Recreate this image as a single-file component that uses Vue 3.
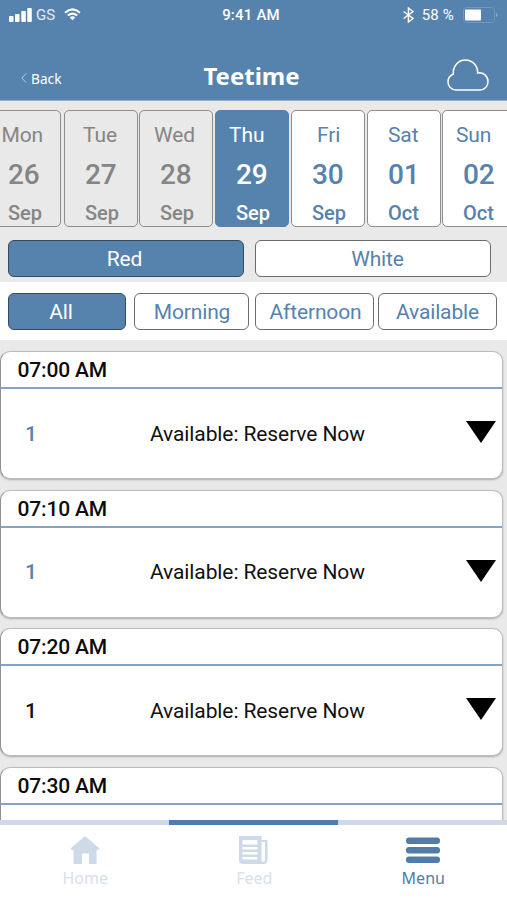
<script setup>
const days = [
  { name: 'Mon', num: '26', month: 'Sep', state: 'past', left: -13, width: 74, inset: 13.5 },
  { name: 'Tue', num: '27', month: 'Sep', state: 'past', left: 64, width: 74, inset: 18 },
  { name: 'Wed', num: '28', month: 'Sep', state: 'past', left: 139, width: 74, inset: 14 },
  { name: 'Thu', num: '29', month: 'Sep', state: 'selected', left: 215, width: 74, inset: 13 },
  { name: 'Fri', num: '30', month: 'Sep', state: 'open', left: 291, width: 74, inset: 25 },
  { name: 'Sat', num: '01', month: 'Oct', state: 'open', left: 367, width: 74, inset: 20 },
  { name: 'Sun', num: '02', month: 'Oct', state: 'open', left: 442, width: 75, inset: 13 }
].map((d, i, all) => ({
  ...d,
  gap: i === 0 ? d.left : d.left - all[i - 1].left - all[i - 1].width
}))

const slots = [
  { time: '07:00 AM', count: '1', accent: true },
  { time: '07:10 AM', count: '1', accent: true },
  { time: '07:20 AM', count: '1', accent: false },
  { time: '07:30 AM' }
]
</script>

<template>
  <div class="screen">
    <header class="top">
      <div class="status">
        <div class="carrier">
          <svg class="signal" width="23" height="14" viewBox="0 0 23 14" fill="#fff">
            <rect x="0" y="8" width="4.5" height="6" rx=".8" />
            <rect x="6" y="6" width="4.5" height="8" rx=".8" />
            <rect x="12.300" y="3" width="4.500" height="11" rx=".8" />
            <rect x="18.300" y="0" width="4.500" height="14" rx=".8" />
          </svg>
          <span class="gs">GS</span>
          <svg class="wifi" width="17" height="13" viewBox="0 0 17 13" fill="none" stroke="#fff" stroke-width="2">
            <path d="M1 4.700Q8.500-2 16 4.700M3.800 7.600Q8.500 3.600 13.200 7.600" />
            <path d="M5.700 9.400Q8.500 7.200 11.300 9.400L8.500 12.300Z" fill="#fff" stroke="none" />
          </svg>
        </div>
        <div class="clock">9:41 AM</div>
        <div class="power">
          <svg width="11" height="16" viewBox="0 0 11 16" fill="none" stroke="#fff" stroke-width="1.400">
            <path d="M.6 4.500L10 11.500L5.400 15V1L10 4.500L.6 11.500" />
          </svg>
          <span class="percent">58 %</span>
          <svg class="battery" width="36" height="16" viewBox="0 0 36 16">
            <rect x=".5" y=".5" width="31" height="15" rx="3" fill="none" stroke="#7098c0" />
            <rect x="2" y="2.500" width="16" height="11" rx=".8" fill="#fff" />
            <path d="M33.300 6Q35.500 8 33.300 10Z" fill="#a5bfd9" />
          </svg>
        </div>
      </div>
      <div class="titlebar">
        <div class="back">
          <svg width="6" height="10" viewBox="0 0 6 10" fill="none" stroke="#b7cce1" stroke-width="1"><path d="M5.200.5L.8 5L5.200 9.500" /></svg>
          <span>Back</span>
        </div>
        <h1>Teetime</h1>
        <svg class="cloud" width="42" height="32" viewBox="0 0 42 32" fill="none" stroke="#fff" stroke-width="1.500">
          <path d="M9 31C4.200 31 1 27.300 1 22.700C1 19.200 3.200 16.500 6.300 15.300C5.600 7.300 11.200 1 18.300 1C25.500 1 31 6.800 30.600 14C36.500 13 41 17.300 41 22.500C41 27.300 37.600 31 33 31Z" />
        </svg>
      </div>
    </header>

    <div class="days">
      <div v-for="d in days" :key="d.num" class="day" :class="d.state" :style="{ marginLeft: d.gap + 'px', width: d.width + 'px' }">
        <span class="name" :style="{ paddingLeft: d.inset + 'px' }">{{ d.name }}</span>
        <span class="num">{{ d.num }}</span>
        <span class="month">{{ d.month }}</span>
      </div>
    </div>

    <div class="courses">
      <button class="pill active red">Red</button>
      <button class="pill white">White</button>
    </div>

    <div class="filters">
      <button class="pill active all">All</button>
      <button class="pill morning">Morning</button>
      <button class="pill afternoon">Afternoon</button>
      <button class="pill available">Available</button>
    </div>

    <main class="list">
      <section v-for="s in slots" :key="s.time" class="slot">
        <h2>{{ s.time }}</h2>
        <div v-if="s.count" class="row">
          <span class="count" :class="{ accent: s.accent }">{{ s.count }}</span>
          <span class="label">Available: Reserve Now</span>
          <svg class="arrow" width="30" height="22" viewBox="0 0 30 22"><path d="M0 0H30L15 22Z" /></svg>
        </div>
      </section>
    </main>

    <nav class="tabs">
      <div class="tab">
        <svg width="30" height="28" viewBox="0 0 30 28" fill="currentColor"><path d="M15 0L29.500 12.500L28 14H26.500V28H19V17.500H12V28H3.500V14H2L.5 12.500Z" /></svg>
        <span>Home</span>
      </div>
      <div class="tab">
        <svg width="30" height="28" viewBox="0 0 30 28">
          <path fill="currentColor" fill-rule="evenodd" d="M0 0H22.500V4H28.500V24Q28.500 28 24.500 28H4Q0 28 0 24ZM3.500 4V8.500H18.500V4ZM3.500 11V13.500H18.500V11ZM3.500 16V18.500H18.500V16ZM3.500 21V23.500H18.500V21ZM22.500 6V24Q22.500 25.800 24.300 25.800Q26 25.800 26 24V6Z" />
        </svg>
        <span>Feed</span>
      </div>
      <div class="tab current">
        <svg width="34" height="28" viewBox="0 0 34 28" fill="currentColor">
          <rect y="1.500" width="34" height="6.500" rx="3" /><rect y="11" width="34" height="6.500" rx="3" /><rect y="20.500" width="34" height="6.500" rx="3" />
        </svg>
        <span>Menu</span>
      </div>
    </nav>
  </div>
</template>

<style>
body { overflow: hidden; background: #fff; }
</style>

<style scoped>
* { box-sizing: border-box; }
.screen { width: 507px; height: 900px; overflow: hidden; display: flex; flex-direction: column; background: #e9e9e9; font-family: Roboto, sans-serif; color: #111; }
.top { height: 101px; flex: none; background: #5682ae; color: #fff; border-bottom: 1px solid #8eacd0; }
.status { height: 29px; display: grid; grid-template-columns: 1fr auto 1fr; align-items: center; padding: 0 8px 0 9px; }
.carrier { display: flex; align-items: center; font-size: 15px; }
.gs { margin: 1px 9px 0 4px; color: #e3ecf5; }
.wifi { margin-top: -1px; }
.clock { font-size: 15px; font-weight: 500; padding: 1px 6px 0 0; letter-spacing: .2px; }
.power { display: flex; align-items: center; justify-content: flex-end; font-size: 15px; letter-spacing: .2px; }
.percent { margin: 0 9px 0 8px; }
.titlebar { height: 70px; display: grid; grid-template-columns: 1fr auto 1fr; align-items: center; padding: 0 18px 0 21px; font-family: "Noto Sans", sans-serif; }
.back { display: flex; align-items: center; gap: 4px; font-size: 13.700px; padding-top: 28px; }
h1 { margin: 23px 7px 0 0; font-size: 24px; line-height: 30px; font-weight: 700; }
.cloud { justify-self: end; margin-top: 22px; }
.days { height: 133px; flex: none; display: flex; padding-top: 9px; }
.day { height: 117px; flex: none; display: flex; flex-direction: column; border: 1.5px solid #8d8d91; border-radius: 5px; background: #fff; color: #5682ae; }
.day.past { background: #e9e9e9; color: #858585; }
.day.selected { background: #5682ae; border-color: #5682ae; color: #fff; }
.name { font-size: 21px; line-height: 24px; margin-top: 12px; letter-spacing: -.1px; }
.num { font-size: 28px; line-height: 32px; font-weight: 500; margin-top: 12px; padding-left: 20px; letter-spacing: -.2px; }
.month { font-size: 20px; line-height: 24px; font-weight: 500; margin-top: 10px; padding-left: 20px; }
.courses { height: 48px; flex: none; display: grid; grid-template-columns: 236px 236px; gap: 11px; padding: 6px 0 0 8px; }
.filters { height: 58px; flex: none; display: flex; padding: 11px 0 0 8px; background: #fff; }
.pill { height: 37px; margin: 0; padding: 1px 0 0; border: 1.5px solid #6c6c6c; border-radius: 6px; background: #fff; color: #5682ae; font: 400 21px/33px Roboto, sans-serif; letter-spacing: -.15px; }
.pill.active { background: #5682ae; border-color: #374b60; color: #fff; }
.pill.red { padding-right: 3px; }
.pill.white { padding-left: 9px; }
.pill.all { width: 118px; padding-right: 12px; }
.pill.morning { width: 115px; margin-left: 7.500px; padding-left: 2px; }
.pill.afternoon { width: 119px; margin-left: 6.500px; padding-left: 2px; }
.pill.available { width: 119px; margin-left: 4px; }
.list { flex: 1; min-height: 0; overflow: hidden; display: flex; flex-direction: column; gap: 10.500px; padding: 11px 4px 0 0; }
.slot { height: 128px; flex: none; background: #fff; border: 1px solid #bcbcbc; border-left-color: #919191; border-radius: 10px; box-shadow: 0 1px 2px #aaa; }
h2 { margin: 0; height: 37px; padding: 1px 0 0 16.500px; border-bottom: 2px solid #83a4c6; font-size: 21px; line-height: 34px; font-weight: 500; color: #0c0c0c; letter-spacing: -.15px; }
.row { height: 89px; display: grid; grid-template-columns: 125px 1fr 30px; align-items: center; padding: 0 6.500px 0 24px; }
.count { font-size: 21px; font-weight: 500; }
.count.accent { color: #5682ae; }
.label { font-size: 21px; letter-spacing: -.1px; }
.arrow { margin-top: -3px; }
.tabs { height: 80px; flex: none; display: grid; grid-template-columns: repeat(3, 1fr); background: linear-gradient(90deg, #cdd9e7 33.400%, #4f7cab 33.400% 66.700%, #cdd9e7 66.700%) top / 100% 5px no-repeat #fff; }
.tab { display: flex; flex-direction: column; align-items: center; padding: 16px 0 0 1.500px; color: #cedae7; font: 16px/22px "Noto Sans", sans-serif; }
.tab span { margin-top: 3px; color: #d8e0ea; }
.tab.current, .tab.current span { color: #4f7cab; }
</style>
